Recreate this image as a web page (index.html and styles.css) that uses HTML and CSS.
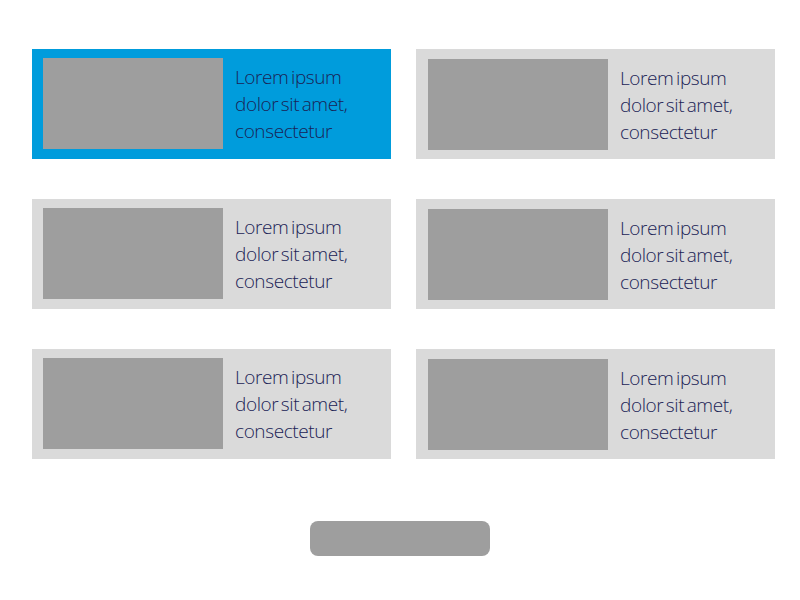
FILE: index.html
```html
<!DOCTYPE html>
<html lang="en">
<head>
  <meta charset="UTF-8">
  <title>Cards</title>
  <link rel="stylesheet" href="styles.css">
</head>
<body>
  <main class="page">
    <div class="grid">
      <div class="card active">
        <div class="thumb"></div>
        <p class="card-text">Lorem ipsum dolor sit amet, consectetur</p>
      </div>
      <div class="card">
        <div class="thumb"></div>
        <p class="card-text">Lorem ipsum dolor sit amet, consectetur</p>
      </div>
      <div class="card">
        <div class="thumb"></div>
        <p class="card-text">Lorem ipsum dolor sit amet, consectetur</p>
      </div>
      <div class="card">
        <div class="thumb"></div>
        <p class="card-text">Lorem ipsum dolor sit amet, consectetur</p>
      </div>
      <div class="card">
        <div class="thumb"></div>
        <p class="card-text">Lorem ipsum dolor sit amet, consectetur</p>
      </div>
      <div class="card">
        <div class="thumb"></div>
        <p class="card-text">Lorem ipsum dolor sit amet, consectetur</p>
      </div>
    </div>
    <button class="more-btn"></button>
  </main>
</body>
</html>
```
FILE: styles.css
```css
:root {
  --blue: #009cdc;
  --card: #dadada;
  --thumb: #9e9e9e;
  --text: #1a2356;
}
* {
  box-sizing: border-box;
  margin: 0;
  padding: 0;
}
html, body {
  background: #fff;
  font-family: "Open Sans", "Noto Sans", sans-serif;
}
.page {
  padding: 49px 25px 0 32px;
  display: flex;
  flex-direction: column;
  align-items: center;
}
.grid {
  width: 743px;
  display: grid;
  grid-template-columns: 359px 359px;
  grid-auto-rows: 110px;
  column-gap: 25px;
  row-gap: 40px;
}
.card {
  height: 110px;
  background: var(--card);
  padding: 9px 11px;
  display: flex;
  align-items: center;
  gap: 12px;
}
/* right column content sits a pixel lower/further in */
.card:nth-child(even) {
  padding: 10px 11px 8px 12px;
}
.card.active {
  background: var(--blue);
}
.thumb {
  width: 180px;
  height: 91px;
  background: var(--thumb);
  flex-shrink: 0;
  align-self: flex-start;
}
.card-text {
  width: 130px;
  font-size: 19px;
  font-weight: 300;
  line-height: 27px;
  letter-spacing: -0.4px;
  word-spacing: -2px;
  color: var(--text);
  margin-top: 1px;
}
.more-btn {
  margin: 62px 0 0 -7px;
  width: 180px;
  height: 35px;
  border: none;
  border-radius: 8px;
  background: var(--thumb);
}
```
